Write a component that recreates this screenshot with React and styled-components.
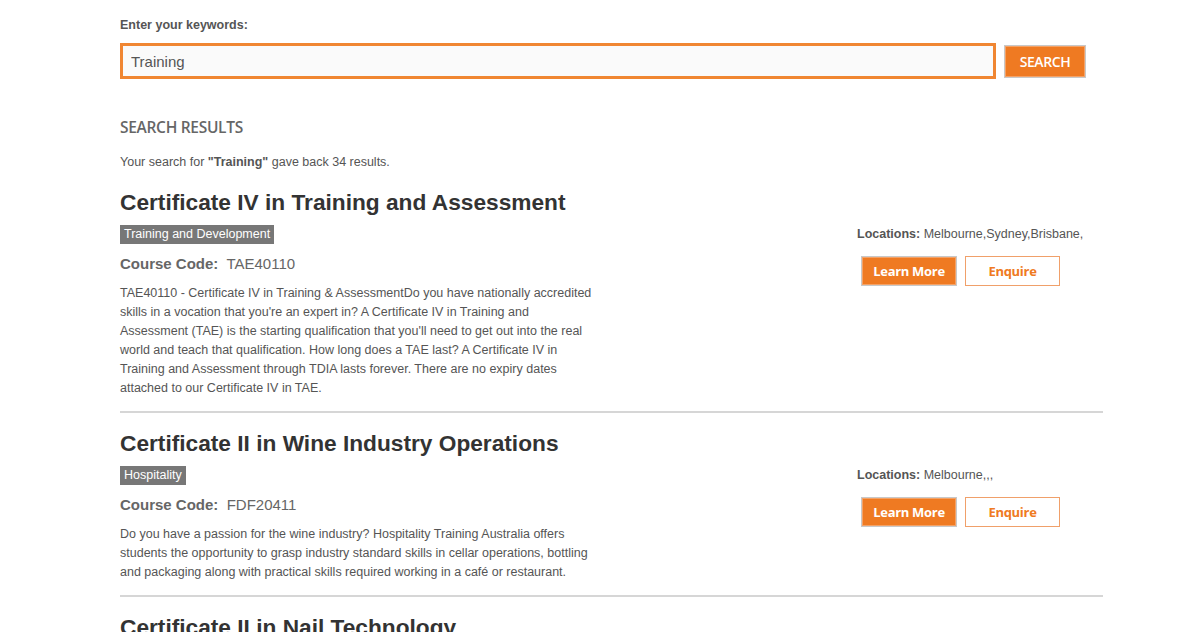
import React from "react";
import styled, { createGlobalStyle } from "styled-components";

const GlobalStyle = createGlobalStyle`
  body {
    margin: 0;
    background: #fff;
    font-family: "Liberation Sans", Arial, sans-serif;
    color: #555;
  }
`;

const courses = [
  {
    title: "Certificate IV in Training and Assessment",
    category: "Training and Development",
    code: "TAE40110",
    locations: "Melbourne,Sydney,Brisbane,",
    description:
      "TAE40110 - Certificate IV in Training & AssessmentDo you have nationally accredited skills in a vocation that you're an expert in? A Certificate IV in Training and Assessment (TAE) is the starting qualification that you'll need to get out into the real world and teach that qualification. How long does a TAE last? A Certificate IV in Training and Assessment through TDIA lasts forever. There are no expiry dates attached to our Certificate IV in TAE.",
  },
  {
    title: "Certificate II in Wine Industry Operations",
    category: "Hospitality",
    code: "FDF20411",
    locations: "Melbourne,,,",
    description:
      "Do you have a passion for the wine industry? Hospitality Training Australia offers students the opportunity to grasp industry standard skills in cellar operations, bottling and packaging along with practical skills required working in a café or restaurant.",
  },
  {
    title: "Certificate II in Nail Technology",
    category: "Beauty",
    code: "SHB20216",
    locations: "Melbourne,,,",
    description: "",
  },
];

function App() {
  return (
    <>
      <GlobalStyle />
      <Page>
        <Label>Enter your keywords:</Label>
        <SearchRow>
          <SearchInput defaultValue="Training" />
          <SearchButton>SEARCH</SearchButton>
        </SearchRow>

        <ResultsHeading>SEARCH RESULTS</ResultsHeading>
        <Summary>
          Your search for <strong>"Training"</strong> gave back 34 results.
        </Summary>

        {courses.map((course) => (
          <Course key={course.code}>
            <Title>{course.title}</Title>
            <CourseBody>
              <Info>
                <div>
                  <Tag>{course.category}</Tag>
                </div>
                <Code>
                  <strong>Course Code:</strong>&nbsp; {course.code}
                </Code>
                <Description>{course.description}</Description>
              </Info>
              <Side>
                <Locations>
                  <strong>Locations:</strong> {course.locations}
                </Locations>
                <Actions>
                  <Button primary>Learn More</Button>
                  <Button>Enquire</Button>
                </Actions>
              </Side>
            </CourseBody>
          </Course>
        ))}
      </Page>
    </>
  );
}

export default App;

const Page = styled.div`
  padding: 17px 97px 0 120px;
  height: 632px;
  overflow: hidden;
  box-sizing: border-box;
`;

const Label = styled.div`
  font-size: 12.5px;
  line-height: 16px;
  font-weight: bold;
  color: #555;
`;

const SearchRow = styled.div`
  display: flex;
  align-items: center;
  gap: 8px;
  margin-top: 10px;
`;

const SearchInput = styled.input`
  width: 876px;
  height: 36px;
  box-sizing: border-box;
  border: 3px solid #f08632;
  background: #fafafa;
  padding: 0 8px;
  font-family: "Liberation Sans", Arial, sans-serif;
  font-size: 15px;
  color: #555;
  outline: none;
`;

const SearchButton = styled.button`
  width: 82px;
  height: 33px;
  box-sizing: border-box;
  background: #ef7a22;
  border: 1px solid #c8c8c8;
  box-shadow: inset 0 0 0 1px #f5a266;
  color: #fff;
  font-family: "Open Sans", sans-serif;
  font-weight: 600;
  font-size: 14px;
  letter-spacing: -0.4px;
  padding: 0;
`;

const ResultsHeading = styled.h2`
  margin: 38px 0 0;
  font-family: "Open Sans", sans-serif;
  font-weight: 600;
  font-size: 15.5px;
  line-height: 20px;
  color: #666;
  letter-spacing: -0.3px;
`;

const Summary = styled.p`
  margin: 17px 0 0;
  font-size: 12.5px;
  line-height: 16px;
  color: #555;
`;

const Course = styled.div`
  padding: 18px 0 13px;
  border-bottom: 2px solid #d6d6d6;
  & + & {
    padding-top: 16px;
  }
`;

const Title = styled.h3`
  margin: 0;
  font-size: 22.7px;
  line-height: 28px;
  font-weight: bold;
  color: #333;
`;

const CourseBody = styled.div`
  display: grid;
  grid-template-columns: 737px 1fr;
  margin-top: 9px;
`;

const Info = styled.div``;

const Tag = styled.span`
  display: inline-block;
  vertical-align: top;
  background: #777;
  color: #fff;
  font-size: 12.5px;
  line-height: 19px;
  padding: 0 4px;
`;

const Code = styled.div`
  margin-top: 10px;
  font-size: 15px;
  line-height: 20px;
  color: #666;
`;

const Description = styled.p`
  margin: 10px 0 0;
  max-width: 476px;
  font-size: 12.5px;
  line-height: 19px;
  color: #555;
`;

const Side = styled.div`
  padding-top: 1px;
`;

const Locations = styled.div`
  font-size: 12.5px;
  line-height: 16px;
  color: #555;
`;

const Actions = styled.div`
  display: flex;
  gap: 8px;
  margin: 14px 0 0 4px;
`;

const Button = styled.button`
  width: ${(p) => (p.primary ? "96px" : "95px")};
  height: 30px;
  box-sizing: border-box;
  padding: 0;
  font-family: "Open Sans", sans-serif;
  font-weight: 700;
  font-size: 13px;
  letter-spacing: -0.3px;
  color: ${(p) => (p.primary ? "#fff" : "#ef7a22")};
  background: ${(p) => (p.primary ? "#ef7a22" : "#fff")};
  border: 1px solid ${(p) => (p.primary ? "#c8c8c8" : "#f0a06a")};
  box-shadow: ${(p) => (p.primary ? "inset 0 0 0 1px #f5a266" : "none")};
`;
